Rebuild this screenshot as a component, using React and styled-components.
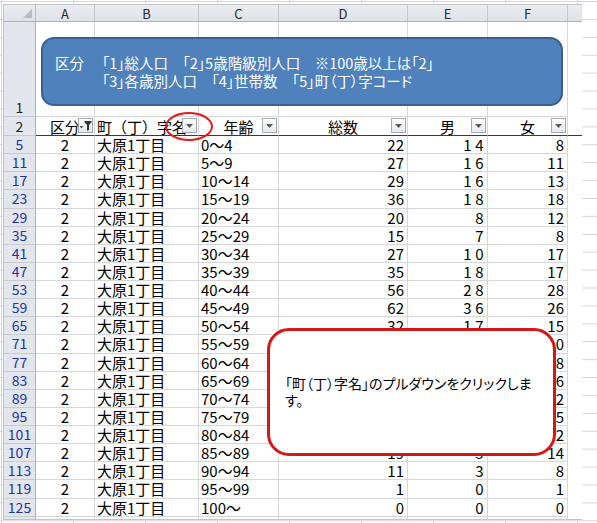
import React from "react";
import styled, { createGlobalStyle } from "styled-components";

const GlobalStyle = createGlobalStyle`
  html, body { margin: 0; padding: 0; background: #fff; }
  body { font-family: "Noto Sans CJK JP", "Noto Sans", sans-serif; }
`;

const Page = styled.div`
  width: 597px;
  height: 523px;
  box-sizing: border-box;
  padding: 4px 0 0 3px;
  overflow: hidden;
  background-color: #fff;
  background-image: linear-gradient(to right, #d6d6d6 1px, transparent 1px),
    linear-gradient(to bottom, #d6d6d6 1px, transparent 1px);
  background-size: 72px 17.92px;
  background-position: 1px 1px;
`;

const Sheet = styled.div`
  position: relative;
  width: 579px;
  height: 516px;
  box-sizing: border-box;
  border-left: 1px solid #c4c4c4;
  border-top: 1px solid #c4c4c4;
  border-bottom: 1px solid #c4c4c4;
  overflow: hidden;
  background: #fff;
  display: grid;
  grid-template-columns: 32px 59px 104px 80px 129px 80px 80px 15px;
  grid-template-rows: 17px 95px 19px repeat(22, 18.14px);
  color: #000;
`;

const Corner = styled.div`
  display: flex;
  justify-content: flex-end;
  align-items: flex-end;
  padding: 0 3px 3px 0;
  box-sizing: border-box;
  background: linear-gradient(#e9ecf0, #dfe3e8);
  border-right: 1px solid #b6bdc6;
  border-bottom: 1px solid #a9b2bd;
`;

const CornerTri = styled.span`
  width: 0;
  height: 0;
  border-left: 9px solid transparent;
  border-bottom: 9px solid #b7bcc3;
`;

const ColHead = styled.div`
  display: flex;
  align-items: center;
  justify-content: center;
  box-sizing: border-box;
  background: linear-gradient(#e9ecf0, #dfe3e8);
  border-right: 1px solid #c3c9d1;
  border-bottom: 1px solid #a9b2bd;
  font-size: 13px;
  color: #2b2b2b;
  line-height: 1;
`;

const RowHead = styled.div`
  display: flex;
  justify-content: center;
  align-items: ${(p) => (p.$bottom ? "flex-end" : "center")};
  box-sizing: border-box;
  background: #e3e7ed;
  border-right: 1px solid #a9b2bd;
  border-bottom: 1px solid #c7ccd3;
  font-size: 14px;
  line-height: 17px;
  color: ${(p) => (p.$blue ? "#1d34a8" : "#222")};
`;

const Cell = styled.div`
  display: flex;
  align-items: center;
  justify-content: ${(p) =>
    p.$align === "right" ? "flex-end" : p.$align === "center" ? "center" : "flex-start"};
  box-sizing: border-box;
  padding: 0 ${(p) => (p.$align === "right" ? "3px" : "2px")} 0 2px;
  border-right: ${(p) => (p.$blank ? "none" : "1px solid #d5d7da")};
  border-bottom: ${(p) => (p.$blank ? "none" : "1px solid #d5d7da")};
  font-size: 15px;
  line-height: 17px;
  white-space: nowrap;
  overflow: visible;
`;

const Num = styled.span`
  letter-spacing: ${(p) => (p.$spaced ? "3.5px" : "0")};
  margin-right: ${(p) => (p.$spaced ? "-3px" : "0")};
`;

const HeadCell = styled.div`
  position: relative;
  display: flex;
  align-items: center;
  justify-content: ${(p) => (p.$align === "left" ? "flex-start" : "center")};
  box-sizing: border-box;
  padding: 0 2px;
  border-right: ${(p) => (p.$blank ? "none" : "1px solid #d5d7da")};
  border-bottom: 1px solid #3a3a3a;
  font-size: 15px;
  line-height: 17px;
  white-space: nowrap;
`;

const FilterButton = styled.span`
  position: absolute;
  right: 1px;
  bottom: 2px;
  width: 15px;
  height: 15px;
  box-sizing: border-box;
  border: 1px solid #a3aab4;
  background: linear-gradient(#ffffff, #e6e9ed);
  display: flex;
  align-items: center;
  justify-content: center;
`;

const Shape = styled.div`
  position: absolute;
  left: 37px;
  top: 32px;
  width: 522px;
  height: 69px;
  box-sizing: border-box;
  background: #4f81bd;
  border: 2px solid #3a6090;
  border-radius: 13px;
  padding-left: 12px;
  display: grid;
  grid-template-columns: 47px auto;
  align-content: center;
  color: #fff;
  font-size: 14.5px;
  line-height: 18px;
  font-feature-settings: "palt";
  white-space: nowrap;
`;

const ShapeLine = styled.div`
  grid-column: 2;
`;

const Ring = styled.div`
  position: absolute;
  left: 161px;
  top: 107px;
  width: 48px;
  height: 29px;
  box-sizing: border-box;
  border: 2.5px solid #e21a1a;
  border-radius: 50%;
`;

const Callout = styled.div`
  position: absolute;
  left: 263px;
  top: 323px;
  width: 289px;
  height: 128px;
  box-sizing: border-box;
  background: #fff;
  border: 3px solid #d41818;
  border-radius: 22px;
  display: flex;
  align-items: center;
  padding-left: 15px;
  font-size: 14px;
  line-height: 17px;
  color: #000;
  font-feature-settings: "palt";
  white-space: nowrap;
`;

const Arrow = () => (
  <svg width="7" height="4" viewBox="0 0 7 4">
    <polygon points="0,0 7,0 3.5,4" fill="#5a5a5a" />
  </svg>
);

const FunnelIcon = () => (
  <svg width="13" height="13" viewBox="0 0 13 13">
    <polygon points="0.5,7 4.5,7 2.5,9.5" fill="#555" />
    <polygon points="5.5,2 12.5,2 12.5,3.2 10,6 10,11 8,11.8 8,6 5.5,3.2" fill="#333" />
  </svg>
);

const cols = ["A", "B", "C", "D", "E", "F", ""];

const rows = [
  [5, "0～4", 22, 14, 8],
  [11, "5～9", 27, 16, 11],
  [17, "10～14", 29, 16, 13],
  [23, "15～19", 36, 18, 18],
  [29, "20～24", 20, 8, 12],
  [35, "25～29", 15, 7, 8],
  [41, "30～34", 27, 10, 17],
  [47, "35～39", 35, 18, 17],
  [53, "40～44", 56, 28, 28],
  [59, "45～49", 62, 36, 26],
  [65, "50～54", 32, 17, 15],
  [71, "55～59", 30, 20, 10],
  [77, "60～64", 40, 22, 18],
  [83, "65～69", 38, 22, 16],
  [89, "70～74", 24, 12, 12],
  [95, "75～79", 40, 15, 25],
  [101, "80～84", 34, 12, 22],
  [107, "85～89", 19, 5, 14],
  [113, "90～94", 11, 3, 8],
  [119, "95～99", 1, 0, 1],
  [125, "100～", 0, 0, 0],
  [131, "総数", 640, 310, 330],
];

const headers = [
  { label: "区分", active: true },
  { label: "町（丁）字名", align: "left" },
  { label: "年齢" },
  { label: "総数" },
  { label: "男" },
  { label: "女" },
];

export default function App() {
  return (
    <>
      <GlobalStyle />
      <Page>
        <Sheet>
          <Corner>
            <CornerTri />
          </Corner>
          {cols.map((c, i) => (
            <ColHead key={"h" + i}>{c}</ColHead>
          ))}

          <RowHead $bottom>1</RowHead>
          {cols.map((c, i) => (
            <Cell key={"r1" + i} $blank={i === 6} />
          ))}

          <RowHead>2</RowHead>
          {headers.map((h, i) => (
            <HeadCell key={"hd" + i} $align={h.align}>
              {h.label}
              <FilterButton>{h.active ? <FunnelIcon /> : <Arrow />}</FilterButton>
            </HeadCell>
          ))}
          <HeadCell $blank />

          {rows.map(([n, age, total, m, f]) => (
            <React.Fragment key={n}>
              <RowHead $blue>{n}</RowHead>
              <Cell $align="center">2</Cell>
              <Cell>大原1丁目</Cell>
              <Cell>{age}</Cell>
              <Cell $align="right">{total}</Cell>
              <Cell $align="right">
                <Num $spaced>{m}</Num>
              </Cell>
              <Cell $align="right">{f}</Cell>
              <Cell $blank />
            </React.Fragment>
          ))}

          <Shape>
            <span>区分</span>
            <span>「1」総人口　「2」5歳階級別人口　※100歳以上は「2」</span>
            <ShapeLine>「3」各歳別人口　「4」世帯数　「5」町（丁）字コード</ShapeLine>
          </Shape>
          <Ring />
          <Callout>
            <div>
              「町（丁）字名」のプルダウンをクリックしま
              <br />
              す。
            </div>
          </Callout>
        </Sheet>
      </Page>
    </>
  );
}
